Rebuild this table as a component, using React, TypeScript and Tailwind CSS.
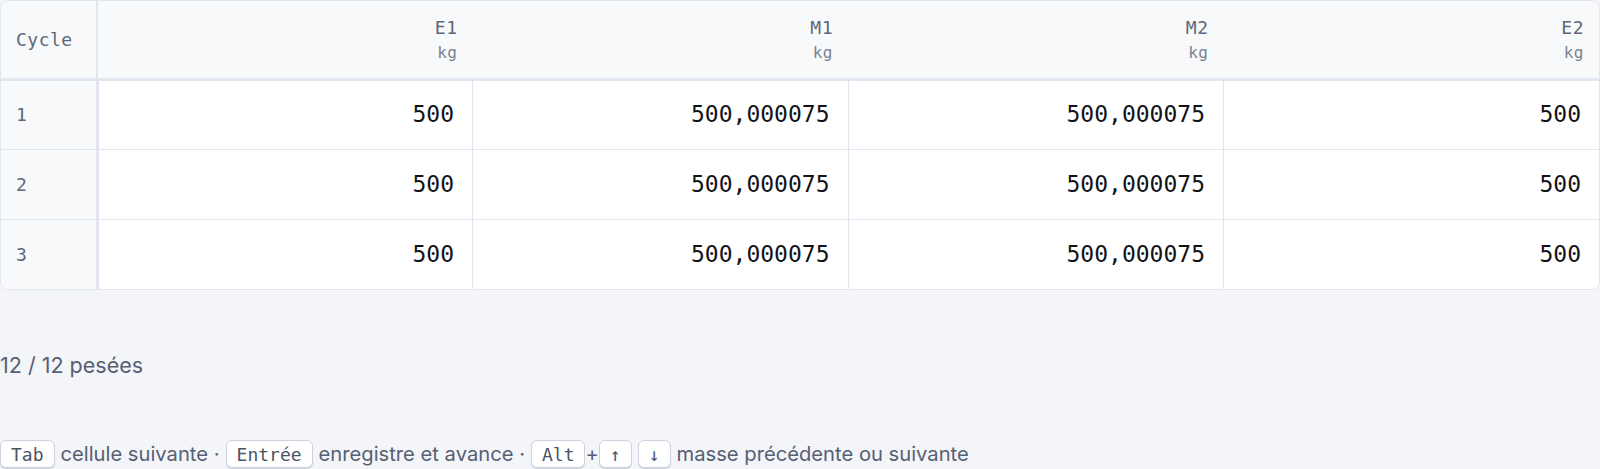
const columns = ["E1", "M1", "M2", "E2"];

const rows = [
  { cycle: 1, values: ["500", "500,000075", "500,000075", "500"] },
  { cycle: 2, values: ["500", "500,000075", "500,000075", "500"] },
  { cycle: 3, values: ["500", "500,000075", "500,000075", "500"] },
];

const mono = "font-['DejaVu_Sans_Mono',monospace]";
const sans = "font-['Inter','Noto_Sans',sans-serif]";

// Little keyboard key chip
const Kbd = ({ children }: { children: React.ReactNode }) => (
  <span
    className={`${mono} inline-flex h-[28px] items-center rounded-md border border-[#cdd3de] bg-white px-[10px] text-[18px] text-[#4b5565] shadow-[0_1px_0_#cdd3de]`}
  >
    {children}
  </span>
);

export default function App() {
  return (
    <div className={`${sans} min-h-screen w-[1600px] bg-[#f4f5f9]`}>
      {/* Weighing grid */}
      <div className="overflow-hidden rounded-lg border border-[#e2e5ed] bg-white">
        <table className="w-full table-fixed border-collapse">
          <colgroup>
            <col className="w-[96px]" />
            <col />
            <col />
            <col />
            <col />
          </colgroup>
          <thead>
            <tr className="h-[78px] border-b-[3px] border-[#e2e5ed] bg-[#f8f9fb]">
              <th
                className={`${mono} border-r-2 border-[#e2e5ed] pl-[15px] text-left text-[18px] font-normal tracking-[0.5px] text-[#5d6779]`}
              >
                Cycle
              </th>
              {columns.map((c) => (
                <th key={c} className={`${mono} pr-[15px] text-right font-normal`}>
                  <div className="text-[18px] leading-[24px] tracking-[0.5px] text-[#5d6779]">{c}</div>
                  <div className="mt-[3px] text-[16px] leading-[20px] tracking-[0.5px] text-[#7a8393]">kg</div>
                </th>
              ))}
            </tr>
          </thead>
          <tbody>
            {rows.map((r, i) => (
              <tr key={r.cycle} className={`h-[70px] ${i > 0 ? "border-t border-[#e2e5ed]" : ""}`}>
                <td
                  className={`${mono} border-r-[3px] border-[#e2e5ed] bg-[#f8f9fb] pl-[15px] text-[18px] text-[#5d6779]`}
                >
                  {r.cycle}
                </td>
                {r.values.map((v, j) => (
                  <td
                    key={j}
                    className={`${mono} pr-[18px] text-right text-[23px] text-[#111318] ${
                      j < 3 ? "border-r border-[#e2e5ed]" : ""
                    }`}
                  >
                    {v}
                  </td>
                ))}
              </tr>
            ))}
          </tbody>
        </table>
      </div>

      {/* Progress */}
      <p className="mt-[61px] text-[21.5px] leading-[28px] text-[#566073]">12 / 12 pesées</p>

      {/* Keyboard hints */}
      <div className="mt-[60px] flex items-center text-[20.2px] text-[#566073]">
        <Kbd>Tab</Kbd>
        <span className="mx-[6px]">cellule suivante ·</span>
        <Kbd>Entrée</Kbd>
        <span className="mx-[6px]">enregistre et avance ·</span>
        <Kbd>Alt</Kbd>
        <span>+</span>
        <Kbd>↑</Kbd>
        <span className="w-[6px]" />
        <Kbd>↓</Kbd>
        <span className="mx-[6px]">masse précédente ou suivante</span>
      </div>
    </div>
  );
}
